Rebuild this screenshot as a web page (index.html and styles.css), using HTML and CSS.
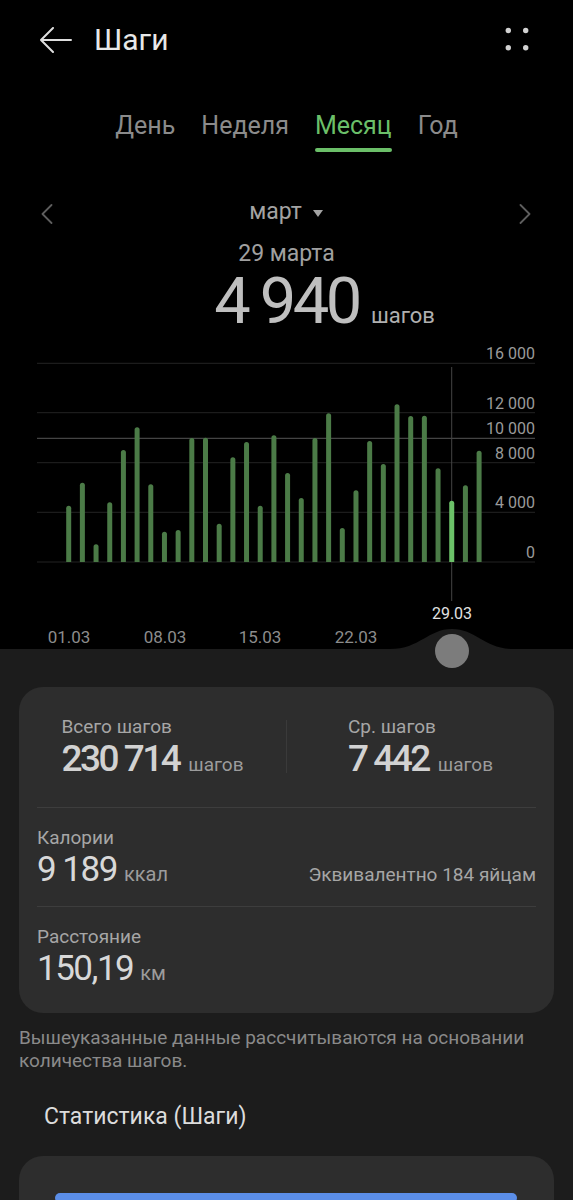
FILE: index.html
```html
<!DOCTYPE html>
<html lang="ru">
<head>
    <meta charset="UTF-8">
    <meta name="viewport" content="width=device-width, initial-scale=1.0">
    <title>Шаги</title>
    <link rel="stylesheet" href="styles.css">
</head>
<body>
    <div class="screen">
        <header class="top-bar">
            <svg class="back" width="32" height="26" viewBox="0 0 32 26">
                <path d="M1 13H31M13 1L1 13L13 25" fill="none" stroke="#dedede" stroke-width="2" stroke-linecap="round" stroke-linejoin="round"/>
            </svg>
            <h1>Шаги</h1>
            <svg class="more" width="26" height="26" viewBox="0 0 26 26">
                <circle cx="4.3" cy="3.5" r="2.7" fill="#d2d2d2"/>
                <circle cx="21.7" cy="3.5" r="2.7" fill="#d2d2d2"/>
                <circle cx="4.3" cy="20.8" r="2.7" fill="#d2d2d2"/>
                <circle cx="21.7" cy="20.8" r="2.7" fill="#d2d2d2"/>
            </svg>
        </header>

        <nav class="tabs">
            <span class="tab">День</span>
            <span class="tab">Неделя</span>
            <span class="tab active">Месяц</span>
            <span class="tab">Год</span>
        </nav>

        <div class="period">
            <svg class="chevron" width="12" height="20" viewBox="0 0 12 20">
                <path d="M10.5 1L1.5 10L10.5 19" fill="none" stroke="#5e5e5e" stroke-width="1.8" stroke-linecap="round" stroke-linejoin="round"/>
            </svg>
            <span class="month">март
                <svg class="caret" width="10" height="7" viewBox="0 0 10 7"><path d="M0 0H10L5 7Z" fill="#a3a3a3"/></svg>
            </span>
            <svg class="chevron" width="12" height="20" viewBox="0 0 12 20">
                <path d="M1.5 1L10.5 10L1.5 19" fill="none" stroke="#5e5e5e" stroke-width="1.8" stroke-linecap="round" stroke-linejoin="round"/>
            </svg>
        </div>

        <div class="day-label">29 марта</div>
        <div class="day-total">
            <span></span>
            <span class="big-number">4 940</span>
            <span class="unit">шагов</span>
        </div>

        <svg class="chart" width="573" height="309" viewBox="0 0 573 309">
            <g class="grid">
                <line x1="37" y1="23.3" x2="535" y2="23.3"/>
                <line x1="37" y1="72.7" x2="535" y2="72.7"/>
                <line x1="37" y1="122.7" x2="535" y2="122.7"/>
                <line x1="37" y1="172.3" x2="535" y2="172.3"/>
                <line x1="37" y1="222" x2="535" y2="222"/>
                <line class="goal" x1="37" y1="98.3" x2="535" y2="98.3"/>
            </g>
            <g class="y-labels">
                <text x="535" y="19.3">16 000</text>
                <text x="535" y="68.7">12 000</text>
                <text x="535" y="94.3">10 000</text>
                <text x="535" y="118.7">8 000</text>
                <text x="535" y="168.3">4 000</text>
                <text x="535" y="218">0</text>
            </g>
            <line class="cursor" x1="451.7" y1="27" x2="451.7" y2="261"/>
            <g id="bars"></g>
            <g class="x-labels">
                <text x="69" y="303">01.03</text>
                <text x="165" y="303">08.03</text>
                <text x="260" y="303">15.03</text>
                <text x="356" y="303">22.03</text>
            </g>
            <text class="selected-date" x="452" y="279">29.03</text>
            <path class="bump" d="M390 309C420 309 428 289 452 289C476 289 484 309 514 309Z"/>
        </svg>

        <section class="sheet">
            <div class="knob"></div>

            <div class="card stats">
                <div class="stats-top">
                    <div class="stat-col">
                        <div>
                            <div class="label">Всего шагов</div>
                            <div class="total"><span class="num-cond">230 714</span><span class="unit-sm">шагов</span></div>
                        </div>
                    </div>
                    <div class="v-divider"></div>
                    <div class="stat-col">
                        <div>
                            <div class="label">Ср. шагов</div>
                            <div class="total"><span class="num-cond">7 442</span><span class="unit-sm">шагов</span></div>
                        </div>
                    </div>
                </div>

                <div class="h-divider"></div>

                <div class="stat-row">
                    <div class="label">Калории</div>
                    <div class="value-line">
                        <span class="num">9 189</span>
                        <span class="unit-sm">ккал</span>
                        <span class="hint">Эквивалентно 184 яйцам</span>
                    </div>
                </div>

                <div class="h-divider"></div>

                <div class="stat-row last">
                    <div class="label">Расстояние</div>
                    <div class="value-line">
                        <span class="num">150,19</span>
                        <span class="unit-sm">км</span>
                    </div>
                </div>
            </div>

            <p class="note">Вышеуказанные данные рассчитываются на основании количества шагов.</p>

            <h2>Статистика (Шаги)</h2>

            <div class="card stat-chart">
                <div class="blue-bar"></div>
            </div>
        </section>
    </div>

    <script>
        // Steps per day in March
        const steps = [4530, 6380, 1430, 4810, 9020, 10850, 6260, 2440, 2580, 9980,
            10010, 3080, 8430, 9660, 4530, 10200, 7170, 5150, 9980, 11970,
            2740, 5770, 9740, 7890, 12700, 11760, 11780, 7540, 4940, 6180, 8960];

        const SELECTED = 28;
        const BASE_Y = 222;
        const SCALE = 198.7 / 16000;
        const barsGroup = document.getElementById('bars');

        steps.forEach(function(value, i) {
            const cx = 68.7 + 13.68 * i;
            const top = BASE_Y - value * SCALE;
            const path = document.createElementNS('http://www.w3.org/2000/svg', 'path');
            path.setAttribute('d', `M${cx - 2.5} ${BASE_Y}V${top + 2.5}a2.5 2.5 0 0 1 5 0V${BASE_Y}z`);
            path.setAttribute('class', i === SELECTED ? 'bar selected' : 'bar');
            barsGroup.appendChild(path);
        });
    </script>
</body>
</html>
```

FILE: styles.css
```css
* {
    box-sizing: border-box;
}
body {
    margin: 0;
    background-color: #000;
    font-family: Roboto, "Noto Sans", sans-serif;
    color: #e6e6e6;
}
.screen {
    width: 573px;
}

/* Header */
.top-bar {
    display: flex;
    align-items: center;
    height: 80px;
    padding: 0 43px 0 40px;
}
.top-bar svg {
    display: block;
}
.top-bar h1 {
    margin: 0 0 0 22px;
    font-size: 30px;
    font-weight: 400;
    line-height: 80px;
    color: #e8e8e8;
}
.more {
    margin-left: auto;
}

/* Tabs */
.tabs {
    display: flex;
    justify-content: center;
    gap: 26px;
    padding-top: 31px;
}
.tab {
    display: flex;
    flex-direction: column;
    font-size: 25px;
    line-height: 30px;
    color: #8b8b8b;
}
.tab::after {
    content: "";
    height: 4px;
    margin-top: 7px;
    border-radius: 2px;
}
.tab.active {
    color: #6bbf69;
}
.tab.active::after {
    background-color: #6bbf69;
}

/* Period selector */
.period {
    display: flex;
    align-items: center;
    justify-content: space-between;
    height: 28px;
    margin-top: 46px;
    padding: 0 42px 0 41px;
}
.chevron {
    display: block;
    margin-top: 4px;
}
.month {
    display: flex;
    align-items: center;
    gap: 11px;
    font-size: 23px;
    line-height: 28px;
    color: #a3a3a3;
}
.caret {
    display: block;
    margin-top: 3px;
}

.day-label {
    margin-top: 16px;
    text-align: center;
    font-size: 23px;
    line-height: 24px;
    color: #a0a0a0;
}
.day-total {
    display: grid;
    grid-template-columns: 1fr auto 1fr;
    align-items: baseline;
    margin-top: 7px;
}
.big-number {
    font-size: 65px;
    line-height: 56px;
    letter-spacing: -3.5px;
    color: #bfbfbf;
}
.day-total .unit {
    margin-left: 12px;
    font-size: 22px;
    line-height: 24px;
    color: #b0b0b0;
}

/* Chart */
.chart {
    display: block;
    margin-top: 11px;
    font-family: Roboto, sans-serif;
}
.grid line {
    stroke: #232323;
    stroke-width: 1;
}
.grid line.goal {
    stroke: #565656;
}
.y-labels text {
    font-size: 16px;
    fill: #9a9a9a;
    text-anchor: end;
}
.x-labels text {
    font-size: 17px;
    fill: #8c8c8c;
    text-anchor: middle;
}
.selected-date {
    font-size: 16px;
    fill: #e2e2e2;
    text-anchor: middle;
}
.cursor {
    stroke: #444;
    stroke-width: 1;
}
.bar {
    fill: #4b7b47;
}
.bar.selected {
    fill: #6bc168;
}
.bump {
    fill: #1c1c1c;
}

/* Bottom sheet */
.sheet {
    position: relative;
    background-color: #1c1c1c;
    padding: 38px 19px 60px;
}
.knob {
    position: absolute;
    top: -15px;
    left: 435px;
    width: 34px;
    height: 34px;
    border-radius: 50%;
    background-color: #7c7c7c;
}
.card {
    background-color: #2d2d2d;
    border-radius: 24px;
}

.stats-top {
    display: flex;
    padding: 28px 0;
}
.stat-col {
    flex: 1;
    display: flex;
    justify-content: center;
}
.v-divider {
    width: 1px;
    margin: 5px 0 6px;
    background-color: #3a3a3a;
}
.h-divider {
    height: 1px;
    margin: 0 18px;
    background-color: #3d3d3d;
}
.label {
    font-size: 19px;
    line-height: 24px;
    color: #a6a6a6;
}
.total {
    display: flex;
    align-items: baseline;
}
.num-cond {
    font-size: 37px;
    font-weight: 500;
    line-height: 40px;
    letter-spacing: -2.5px;
    color: #d2d2d2;
}
.unit-sm {
    margin-left: 9px;
    font-size: 19px;
    line-height: 24px;
    color: #9c9c9c;
}

.stat-row {
    padding: 18px 18px 16px;
}
.stat-row.last {
    padding-bottom: 24px;
}
.value-line {
    display: flex;
    align-items: baseline;
}
.num {
    font-size: 35px;
    line-height: 40px;
    letter-spacing: -1.5px;
    color: #d8d8d8;
}
.value-line .unit-sm {
    margin-left: 7px;
    font-size: 20px;
}
.hint {
    margin-left: auto;
    font-size: 19px;
    line-height: 24px;
    color: #a6a6a6;
}

.note {
    margin: 13px 0 0;
    font-size: 19px;
    line-height: 23px;
    color: #8a8a8a;
}
.sheet h2 {
    margin: 31px 0 0 25px;
    font-size: 23px;
    font-weight: 400;
    line-height: 28px;
    color: #dcdcdc;
}
.stat-chart {
    margin-top: 25px;
    padding: 37px 37px 80px 36px;
}
.blue-bar {
    height: 10px;
    border-radius: 5px;
    background-color: #5b8ee8;
}
```
